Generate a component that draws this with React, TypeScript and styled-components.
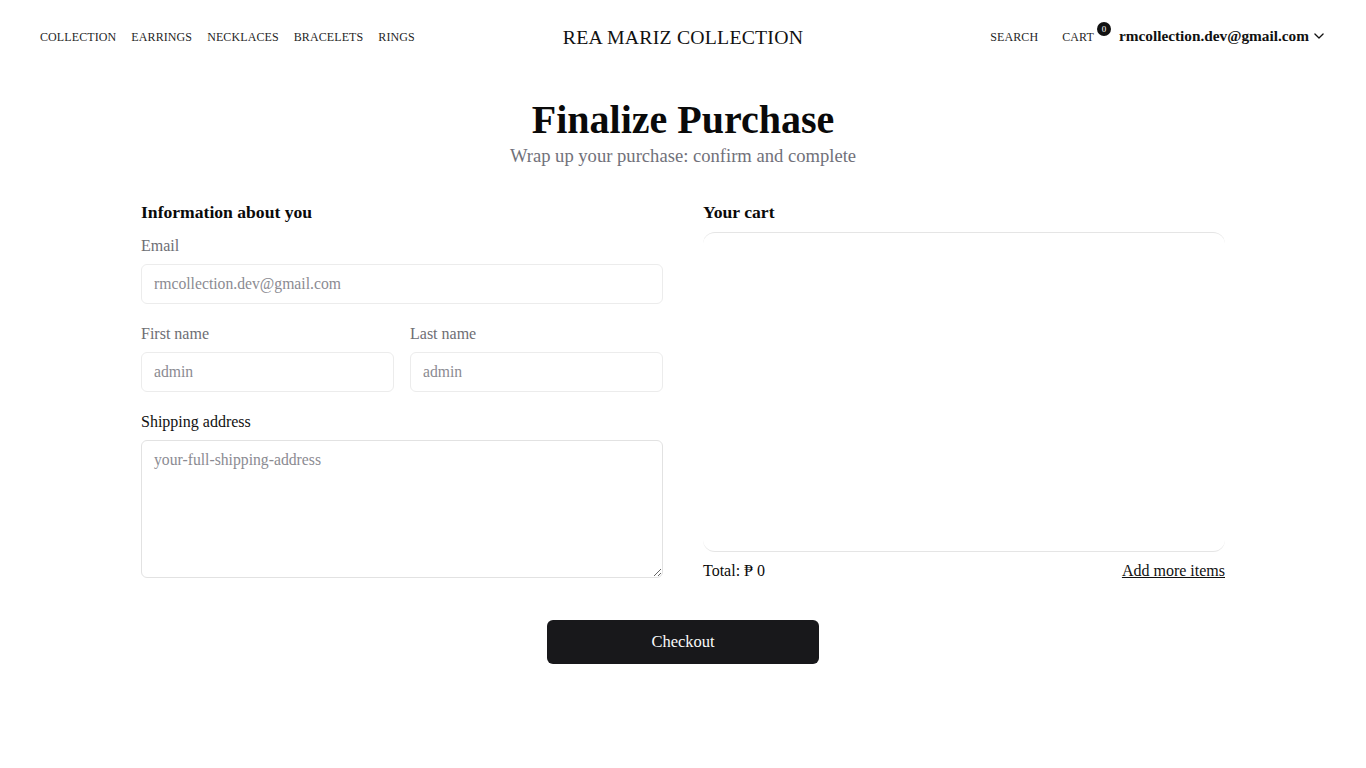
import React from "react";
import styled, { createGlobalStyle } from "styled-components";

const Global = createGlobalStyle`
  * { box-sizing: border-box; }
  body { margin: 0; background: #fff; font-family: "Liberation Serif", "DejaVu Serif", serif; color: #0a0a0a; }
`;

const Page = styled.div`
  min-height: 768px;
  display: flex;
  flex-direction: column;
`;

const Header = styled.header`
  height: 74px;
  padding: 0 40px;
  display: grid;
  grid-template-columns: 1fr auto 1fr;
  align-items: center;
`;

const NavList = styled.nav<{ $end?: boolean }>`
  display: flex;
  align-items: center;
  gap: ${(p) => (p.$end ? "0" : "15px")};
  justify-content: ${(p) => (p.$end ? "flex-end" : "flex-start")};
`;

const NavLink = styled.a`
  font-size: 12px;
  color: #1f1f1f;
  text-transform: uppercase;
  text-decoration: none;
  letter-spacing: 0.1px;
`;

const Logo = styled.div`
  font-size: 19.8px;
  letter-spacing: 0.2px;
  color: #111;
`;

const CartWrap = styled.span`
  display: flex;
  align-items: center;
  margin-left: 24px;
  margin-right: 8px;
`;

const Badge = styled.span`
  width: 14px;
  height: 14px;
  margin-left: 3px;
  margin-top: -17px;
  border-radius: 50%;
  background: #111;
  color: #fff;
  font-size: 9px;
  display: flex;
  align-items: center;
  justify-content: center;
`;

const UserMenu = styled.button`
  border: 0;
  background: none;
  padding: 0;
  display: flex;
  align-items: center;
  gap: 3px;
  font-family: inherit;
  font-size: 15.3px;
  font-weight: 700;
  color: #111;
  margin-top: -2px;
`;

const Main = styled.main`
  width: 1084px;
  margin: 0 auto;
  padding-top: 22px;
`;

const Title = styled.h1`
  margin: 0;
  text-align: center;
  font-size: 40px;
  line-height: 48px;
  font-weight: 700;
`;

const Subtitle = styled.p`
  margin: 0;
  text-align: center;
  font-size: 18.6px;
  line-height: 24px;
  color: #71717a;
`;

const Columns = styled.div`
  margin-top: 32px;
  display: grid;
  grid-template-columns: 1fr 1fr;
  gap: 40px;
`;

const Column = styled.section`
  display: flex;
  flex-direction: column;
`;

const SectionTitle = styled.h2`
  margin: 0 0 8px;
  font-size: 17.6px;
  line-height: 24px;
  font-weight: 700;
`;

const FormBody = styled.div`
  padding-top: 4px;
  display: flex;
  flex-direction: column;
`;

const Field = styled.div`
  display: flex;
  flex-direction: column;
  gap: 8px;
  margin-bottom: 20px;
`;

const Label = styled.label<{ $dark?: boolean }>`
  font-size: 16px;
  line-height: 20px;
  color: ${(p) => (p.$dark ? "#111" : "#6e6e74")};
`;

const Input = styled.input`
  height: 40px;
  border: 1px solid #ececec;
  border-radius: 6px;
  padding: 0 12px;
  font-family: inherit;
  font-size: 15.7px;
  color: #111;
  &::placeholder { color: #8b8b92; }
`;

const TextArea = styled.textarea`
  height: 138px;
  border: 1px solid #e2e2e2;
  border-radius: 6px;
  padding: 10px 12px;
  font-family: inherit;
  font-size: 15.7px;
  &::placeholder { color: #8b8b92; }
`;

const NameRow = styled.div`
  display: grid;
  grid-template-columns: 1fr 1fr;
  gap: 16px;
`;

const CartBox = styled.div`
  height: 320px;
  border-top: 1px solid #e5e5e5;
  border-bottom: 1px solid #e5e5e5;
  border-radius: 12px;
`;

const TotalRow = styled.div`
  margin-top: 9px;
  display: flex;
  justify-content: space-between;
  font-size: 16px;
  line-height: 20px;
`;

const AddLink = styled.a`
  color: #111;
  text-decoration: underline;
`;

const ButtonRow = styled.div`
  display: flex;
  justify-content: center;
  margin-top: 22px;
`;

const CheckoutButton = styled.button`
  width: 272px;
  height: 44px;
  border: 0;
  border-radius: 6px;
  background: #18181b;
  color: #fafafa;
  font-family: inherit;
  font-size: 16.5px;
`;

export default function App() {
  return (
    <Page>
      <Global />
      <Header>
        <NavList>
          <NavLink>Collection</NavLink>
          <NavLink>Earrings</NavLink>
          <NavLink>Necklaces</NavLink>
          <NavLink>Bracelets</NavLink>
          <NavLink>Rings</NavLink>
        </NavList>
        <Logo>REA MARIZ COLLECTION</Logo>
        <NavList $end>
          <NavLink>Search</NavLink>
          <CartWrap>
            <NavLink>Cart</NavLink>
            <Badge>0</Badge>
          </CartWrap>
          <UserMenu>
            rmcollection.dev@gmail.com
            <svg width="14" height="14" viewBox="0 0 24 24" fill="none" stroke="#111" strokeWidth="2.2" strokeLinecap="round" strokeLinejoin="round">
              <path d="m5 8.5 7 7 7-7" />
            </svg>
          </UserMenu>
        </NavList>
      </Header>
      <Main>
        <Title>Finalize Purchase</Title>
        <Subtitle>Wrap up your purchase: confirm and complete</Subtitle>
        <Columns>
          <Column>
            <SectionTitle>Information about you</SectionTitle>
            <FormBody>
              <Field>
                <Label>Email</Label>
                <Input placeholder="rmcollection.dev@gmail.com" />
              </Field>
              <NameRow>
                <Field>
                  <Label>First name</Label>
                  <Input placeholder="admin" />
                </Field>
                <Field>
                  <Label>Last name</Label>
                  <Input placeholder="admin" />
                </Field>
              </NameRow>
              <Field>
                <Label $dark>Shipping address</Label>
                <TextArea placeholder="your-full-shipping-address" />
              </Field>
            </FormBody>
          </Column>
          <Column>
            <SectionTitle>Your cart</SectionTitle>
            <CartBox />
            <TotalRow>
              <span>Total: ₱ 0</span>
              <AddLink>Add more items</AddLink>
            </TotalRow>
          </Column>
        </Columns>
        <ButtonRow>
          <CheckoutButton>Checkout</CheckoutButton>
        </ButtonRow>
      </Main>
    </Page>
  );
}
